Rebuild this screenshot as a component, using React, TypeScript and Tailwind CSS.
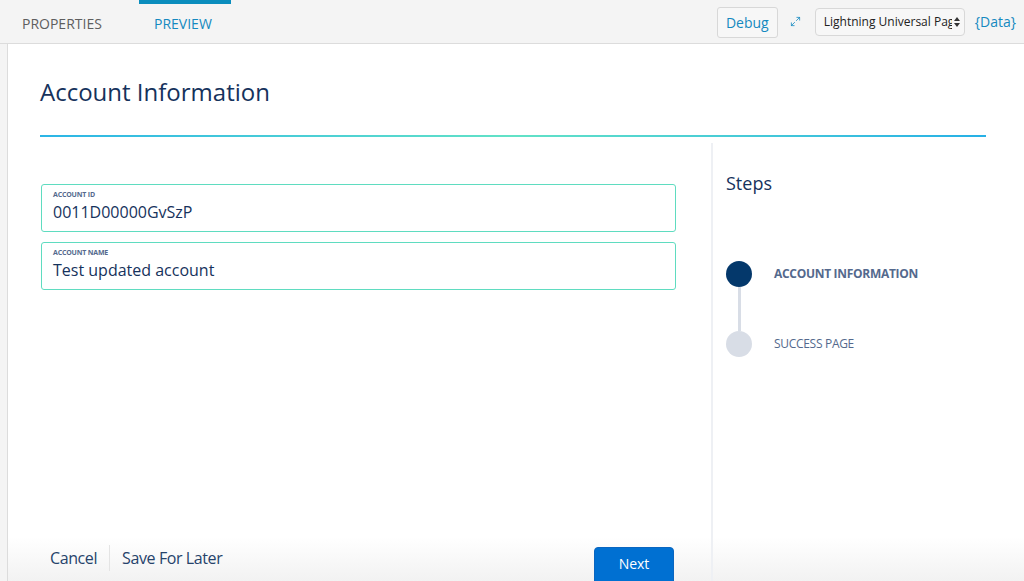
import { Maximize2 } from "lucide-react";

const font = { fontFamily: '"Open Sans", "Liberation Sans", sans-serif' };

function Field({ label, value }: { label: string; value: string }) {
  return (
    <div className="h-[48px] border border-[#5fdcc0] rounded-[3px] px-[11px] pt-[5px]">
      <div className="text-[7px] font-bold text-[#54698d] leading-[10px] tracking-tight">{label}</div>
      <div className="text-[16px] text-[#16325c] leading-[22px] mt-[1px]">{value}</div>
    </div>
  );
}

export default function App() {
  return (
    <div className="h-[581px] w-[1024px] flex flex-col overflow-hidden bg-[#f4f4f4]" style={font}>
      {/* Barra superior */}
      <div className="h-[44px] shrink-0 flex items-stretch border-b border-[#dcdcdc]">
        <div className="w-[139px] pl-[22px] flex items-center pt-[4px] text-[14px] text-[#5e5e5e]">PROPERTIES</div>
        <div className="w-[92px] flex flex-col">
          <div className="h-[4px] bg-[#0a8dbd]" />
          <div className="flex-1 flex items-center pl-[15px] text-[14px] text-[#1589c0]">PREVIEW</div>
        </div>
        <div className="flex-1" />
        <div className="flex items-center pr-[8px] gap-[10px]">
          <button className="h-[31px] w-[61px] mt-[2px] bg-[#f7f7f7] border border-[#d8d8d8] rounded-[3px] text-[14px] text-[#1589c0]">
            Debug
          </button>
          <Maximize2 size={11} className="text-[#1589c0] ml-[2px] mr-[4px]" strokeWidth={1.75} />
          <div className="h-[28px] w-[150px] bg-[#f7f7f7] border border-[#d8d8d8] rounded-[4px] flex items-center pl-[8px] pr-[4px] text-[12px] text-[#222] overflow-hidden">
            <span className="flex-1 whitespace-nowrap overflow-hidden">Lightning Universal Pag</span>
            <svg width="6" height="10" viewBox="0 0 6 10" className="ml-[2px] shrink-0">
              <path d="M0 4 L3 0 L6 4 Z M0 6 L3 10 L6 6 Z" fill="#333" />
            </svg>
          </div>
          <span className="text-[14px] text-[#1589c0]">{"{Data}"}</span>
        </div>
      </div>

      {/* Panel principal */}
      <div className="flex-1 pl-[7px] min-h-0">
        <div className="h-full bg-white border-l border-[#dcdcdc] flex flex-col relative">
          <div className="pl-[32px] pr-[38px]">
            <h1 className="h-[91px] flex items-center pt-[4px] text-[24px] text-[#16325c]">Account Information</h1>
            <div className="h-[2px] bg-gradient-to-r from-[#2bb5e6] via-[#62e2c6] to-[#26b0e6]" />
          </div>

          <div className="flex-1 flex min-h-0 pt-[6px]">
            <div className="w-[703px] pl-[33px] pr-[35px] pt-[41px] flex flex-col gap-[10px]">
              <Field label="ACCOUNT ID" value="0011D00000GvSzP" />
              <Field label="ACCOUNT NAME" value="Test updated account" />
            </div>
            <div className="flex-1 border-l-[2px] border-[#eef0f4] pl-[13px] pt-[27px]">
              <div className="text-[18px] text-[#16325c]">Steps</div>
              <div className="mt-[64px]">
                <div className="flex items-center">
                  <div className="w-[26px] h-[26px] rounded-full bg-[#04386b]" />
                  <span className="ml-[22px] text-[12px] font-bold text-[#54698d] tracking-tight">ACCOUNT INFORMATION</span>
                </div>
                <div className="w-[3px] h-[44px] bg-[#d8dde6] ml-[11.5px]" />
                <div className="flex items-center">
                  <div className="w-[26px] h-[26px] rounded-full bg-[#d8dde6]" />
                  <span className="ml-[22px] text-[12px] text-[#54698d] tracking-tight">SUCCESS PAGE</span>
                </div>
              </div>
            </div>
          </div>

          {/* Pie */}
          <div className="absolute left-0 right-0 bottom-0 h-[44px] bg-gradient-to-b from-white to-[#f2f2f2] flex items-start">
            <div className="w-[703px] flex items-end h-full pl-[42px] pr-[37px]">
              <div className="flex items-center h-[34px] mb-[6px]">
                <span className="text-[16px] text-[#26436b] tracking-tight">Cancel</span>
                <span className="w-px h-[26px] bg-[#e4e4e4] mx-[12px]" />
                <span className="text-[16px] text-[#26436b] tracking-tight">Save For Later</span>
              </div>
              <div className="flex-1" />
              <button className="w-[80px] h-[35px] -mb-[1px] pb-[2px] bg-[#0070d2] border border-[#0a66c0] rounded-t-[4px] text-[14px] text-white">
                Next
              </button>
            </div>
            <div className="flex-1 h-full border-l-[2px] border-[#eef0f4]" />
          </div>
        </div>
      </div>
    </div>
  );
}
